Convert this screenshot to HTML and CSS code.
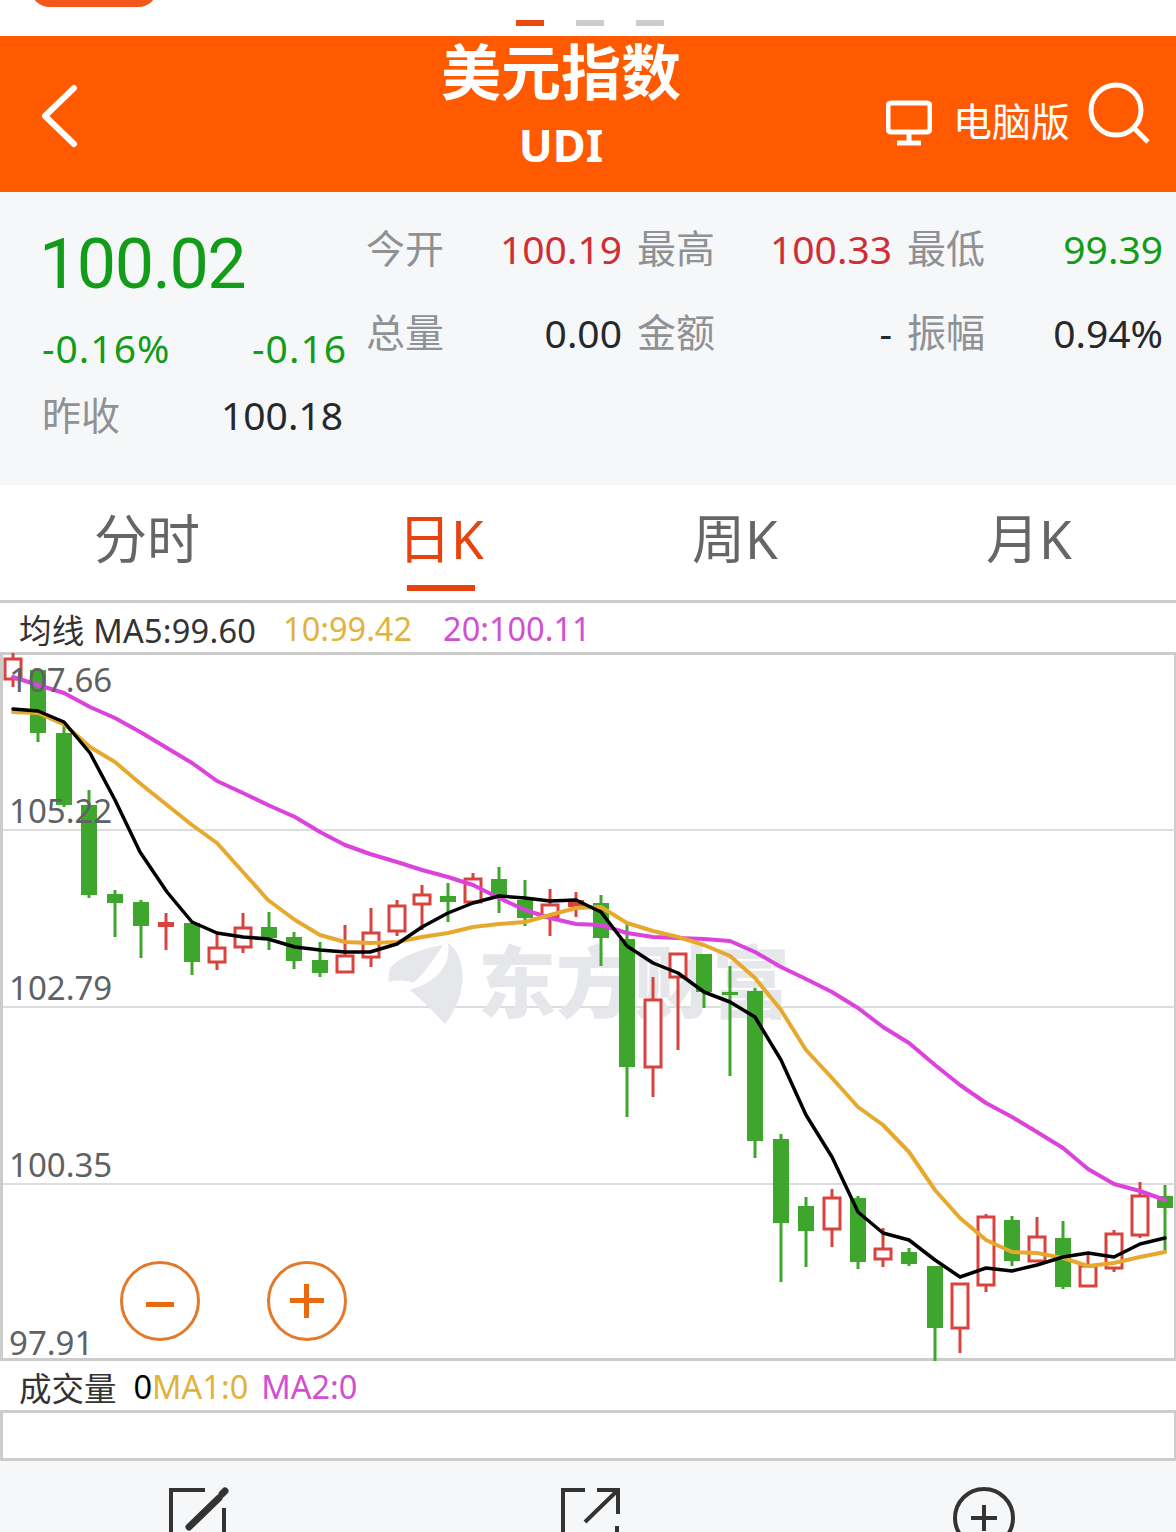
FILE: index.html
```html
<!DOCTYPE html>
<html lang="zh-CN">
<head>
    <meta charset="UTF-8">
    <title>美元指数 UDI</title>
    <link rel="stylesheet" href="styles.css">
</head>
<body>
    <div class="strip">
        <div class="pill"></div>
        <div class="dots"><i class="on"></i><i></i><i></i></div>
    </div>

    <header class="header">
        <svg class="back" width="40" height="64" viewBox="0 0 40 64"><path d="M34 4 5 32l29 28"/></svg>
        <div class="title">
            <h1>美元指数</h1>
            <p>UDI</p>
        </div>
        <div class="header-right">
            <svg class="monitor" width="46" height="46" viewBox="0 0 46 46"><rect x="2" y="3" width="42" height="29" rx="3"/><path d="M23 32v11M11 43h24"/></svg>
            <span class="pc">电脑版</span>
            <svg class="search" width="64" height="62" viewBox="0 0 64 62"><circle cx="29" cy="28" r="25"/><path d="m47 46 14 14"/></svg>
        </div>
    </header>

    <section class="quote">
        <div class="quote-left">
            <div class="price green">100.02</div>
            <div class="change green"><span>-0.16%</span><span>-0.16</span></div>
            <div class="prev"><span class="label">昨收</span><span class="dark">100.18</span></div>
        </div>
        <div class="quote-grid">
            <span class="label">今开</span><span class="val red">100.19</span>
            <span class="label">最高</span><span class="val red">100.33</span>
            <span class="label">最低</span><span class="val green">99.39</span>
            <span class="label">总量</span><span class="val dark">0.00</span>
            <span class="label">金额</span><span class="val dark">-</span>
            <span class="label">振幅</span><span class="val dark">0.94%</span>
        </div>
    </section>

    <nav class="tabs">
        <div class="tab">分时</div>
        <div class="tab active">日K<i></i></div>
        <div class="tab">周K</div>
        <div class="tab">月K</div>
    </nav>

    <div class="legend">
        <span class="ink ma5">均线 MA5:99.60</span>
        <span class="gold ma10">10:99.42</span>
        <span class="pink ma20">20:100.11</span>
    </div>

    <div class="chart">
        <svg id="kline" width="1176" height="703" viewBox="0 655 1176 703"></svg>
        <div class="zoom-btn minus"><i></i></div>
        <div class="zoom-btn plus"><i></i><i></i></div>
    </div>

    <div class="legend vol">
        <span class="ink vol-name">成交量</span>
        <span class="black">0</span><span class="gold">MA1:0</span>
        <span class="pink ma2">MA2:0</span>
    </div>

    <div class="vol-box"></div>

    <div class="toolbar">
        <svg width="64" height="64" viewBox="0 0 64 64"><path d="M40 4H6v60M59 22v42"/><path class="thick" d="m24 41 30-29"/><path class="thick" d="m57 8 3-3"/></svg>
        <svg width="64" height="64" viewBox="0 0 64 64"><path d="M26 4H4v60M58 40v24"/><path d="M26 36 59 4M38 4h21v24"/></svg>
        <svg width="64" height="64" viewBox="0 0 64 64"><circle cx="31" cy="32" r="29"/><path d="M31 19v26M18 32h26"/></svg>
    </div>

    <script src="chart.js"></script>
</body>
</html>
```

FILE: styles.css
```css
* {
    box-sizing: border-box;
}

html, body {
    margin: 0;
    padding: 0;
}

body {
    width: 1176px;
    height: 1532px;
    overflow: hidden;
    background: #fff;
    font-family: "Noto Sans", "Noto Sans CJK SC", sans-serif;
    color: #333;
}

.strip {
    height: 36px;
    position: relative;
    overflow: hidden;
}

.pill {
    width: 128px;
    height: 40px;
    margin: -33px 0 0 30px;
    background: #f5561b;
    border-radius: 24px;
}

.dots {
    position: absolute;
    left: 516px;
    top: 20px;
    display: flex;
    gap: 32px;
}

.dots i {
    width: 28px;
    height: 6px;
    background: #ccc;
}

.dots i.on {
    background: #ec4a12;
}

.header {
    height: 156px;
    background: #ff5a00;
    color: #fff;
    display: grid;
    grid-template-columns: 414px 294px 1fr;
}

.back {
    margin: 48px 0 0 40px;
    fill: none;
    stroke: #fff;
    stroke-width: 6;
    stroke-linecap: round;
    stroke-linejoin: round;
}

.title {
    text-align: center;
}

.title h1 {
    margin: 0;
    font-size: 60px;
    line-height: 72px;
    font-weight: 700;
}

.title p {
    margin: 1px 0 0;
    font-size: 45px;
    line-height: 72px;
    font-weight: 700;
}

.header-right {
    display: flex;
    align-items: flex-start;
    padding-left: 178px;
}

.monitor, .search {
    fill: none;
    stroke: #fff;
    stroke-width: 5;
}

.monitor {
    margin-top: 64px;
}

.pc {
    margin: 60px 17px 0 21px;
    font-size: 39px;
    line-height: 50px;
    white-space: nowrap;
}

.search {
    margin-top: 46px;
    flex: none;
}

.quote {
    height: 293px;
    background: #f6f7f9;
    display: flex;
    font-size: 39px;
}

.quote-left {
    width: 366px;
    padding: 0 19px 0 42px;
    flex: none;
}

.price {
    font-family: Roboto, sans-serif;
    font-size: 70px;
    line-height: 70px;
    margin: 37px 0 0 -3px;
    letter-spacing: -1.5px;
}

.change, .prev {
    display: flex;
    justify-content: space-between;
    line-height: 50px;
}

.change {
    margin-top: 24px;
    letter-spacing: 1px;
}

.prev {
    margin-top: 17px;
    padding-right: 4px;
}

.quote-grid {
    width: 798px;
    height: 184px;
    display: grid;
    grid-template-columns: 78px 178px 93px 177px 93px 178px;
    grid-auto-rows: 84px;
    padding-top: 12px;
    align-items: center;
}

.quote-grid .val {
    text-align: right;
    padding-top: 4px;
}

.quote-grid .label {
    text-align: right;
}

.label {
    color: #8f9194;
    font-size: 39px;
}

.green {
    color: #129c1a;
}

.red {
    color: #cf2e33;
}

.dark {
    color: #26282b;
}

.tabs {
    height: 118px;
    display: flex;
    border-bottom: 3px solid #ccc;
}

.tab {
    flex: 1;
    text-align: center;
    font-size: 53px;
    line-height: 60px;
    padding-top: 24px;
    color: #666;
}

.tab.active {
    color: #e8430f;
}

.tab.active i {
    display: block;
    width: 68px;
    height: 6px;
    margin: 16px auto 0;
    background: #e8430f;
}

.legend {
    height: 52px;
    display: flex;
    align-items: center;
    padding: 2px 0 0 19px;
    font-size: 32.5px;
    border-bottom: 3px solid #ccc;
    white-space: nowrap;
}

.ink {
    color: #333;
}

.black {
    color: #000;
}

.gold {
    color: #e2b33c;
}

.pink {
    color: #d24fd2;
}

.ma5 {
    letter-spacing: 0.25px;
}

.ma10 {
    margin-left: 27px;
}

.ma20 {
    margin-left: 31px;
}

.vol-name {
    margin-right: 17px;
}

.ma2 {
    margin-left: 13px;
}

.chart {
    position: relative;
    height: 706px;
    border-left: 3px solid #ccc;
    border-right: 2px solid #ccc;
    border-bottom: 3px solid #ccc;
}

#kline {
    position: absolute;
    left: -3px;
    top: 0;
    overflow: visible;
}

.zoom-btn {
    position: absolute;
    top: 606px;
    width: 80px;
    height: 80px;
    border: 3px solid #e2792b;
    border-radius: 50%;
}

.zoom-btn i {
    position: absolute;
    background: #ea6a10;
    left: 23px;
    top: 34px;
    width: 28px;
    height: 5px;
}

.minus {
    left: 117px;
}

.minus i {
    top: 38px;
}

.plus {
    left: 264px;
}

.plus i {
    left: 20px;
    width: 34px;
}

.plus i + i {
    left: 34px;
    top: 20px;
    width: 5px;
    height: 34px;
}

.vol-box {
    height: 48px;
    border-left: 3px solid #ccc;
    border-right: 2px solid #ccc;
    border-bottom: 3px solid #ccc;
}

.toolbar {
    height: 71px;
    background: #f6f7f9;
    overflow: hidden;
    display: grid;
    grid-template-columns: repeat(3, 394px);
    padding-top: 25px;
    justify-items: center;
}

.toolbar svg {
    fill: none;
    stroke: #333;
    stroke-width: 4;
}

.toolbar .thick {
    stroke-width: 7;
    stroke-linecap: round;
}

/* chart bits, filled in by chart.js */
.grid-line {
    stroke: #ddd;
    stroke-width: 2;
}

.axis {
    font-size: 33px;
    fill: #5f6163;
}

.mark {
    fill: #e6e7ea;
}

.mark-text {
    font-family: "Noto Sans CJK SC", sans-serif;
    font-size: 78px;
    font-weight: 900;
}

.ma-line {
    fill: none;
    stroke-linejoin: round;
    stroke-linecap: round;
}
```

FILE: chart.js
```js
// type, x, wick top, body top, body bottom, wick bottom
const upColor = "#d8433d";
const downColor = "#3fa62d";

const candles = [
    ["u", 13, 653, 658, 680, 687],
    ["d", 38, 670, 670, 733, 742],
    ["d", 64, 725, 733, 805, 807],
    ["d", 89, 790, 805, 895, 898],
    ["d", 115, 890, 894, 903, 937],
    ["d", 141, 900, 902, 926, 958],
    ["f", 166, 913, 922, 927, 950],
    ["d", 192, 923, 923, 962, 975],
    ["u", 217, 933, 947, 963, 970],
    ["u", 243, 913, 927, 948, 953],
    ["d", 269, 912, 927, 938, 950],
    ["d", 294, 932, 937, 961, 969],
    ["d", 320, 942, 960, 973, 977],
    ["u", 345, 925, 955, 973, 973],
    ["u", 371, 908, 932, 958, 967],
    ["u", 397, 900, 905, 932, 936],
    ["u", 422, 885, 894, 905, 930],
    ["d", 448, 883, 896, 902, 922],
    ["u", 473, 873, 878, 903, 903],
    ["d", 499, 867, 879, 895, 913],
    ["d", 525, 880, 900, 918, 926],
    ["u", 550, 889, 904, 918, 936],
    ["f", 576, 892, 900, 907, 917],
    ["d", 601, 895, 903, 938, 966],
    ["d", 627, 922, 939, 1067, 1117],
    ["u", 653, 977, 999, 1068, 1097],
    ["u", 678, 953, 953, 978, 1050],
    ["d", 704, 954, 954, 992, 1008],
    ["d", 730, 966, 992, 995, 1076],
    ["d", 755, 988, 991, 1141, 1158],
    ["d", 781, 1134, 1139, 1223, 1282],
    ["d", 806, 1197, 1206, 1231, 1267],
    ["u", 832, 1189, 1197, 1230, 1247],
    ["d", 858, 1196, 1198, 1262, 1269],
    ["u", 883, 1228, 1248, 1260, 1267],
    ["d", 909, 1248, 1252, 1264, 1266],
    ["d", 935, 1266, 1266, 1328, 1361],
    ["u", 960, 1283, 1283, 1329, 1353],
    ["u", 986, 1214, 1216, 1286, 1292],
    ["d", 1012, 1216, 1220, 1261, 1266],
    ["u", 1037, 1217, 1236, 1262, 1262],
    ["d", 1063, 1221, 1238, 1287, 1289],
    ["u", 1088, 1255, 1265, 1287, 1287],
    ["u", 1114, 1230, 1233, 1269, 1272],
    ["u", 1140, 1182, 1195, 1236, 1238],
    ["d", 1165, 1185, 1196, 1208, 1252]
];

const ma5 = "13,709 38,711 64,722 90,753 115,800 140,852 167,892 192,922 217,933 243,937 268,939 295,947 320,950 345,952 370,952 397,944 422,927 448,913 473,903 499,896 525,898 550,901 576,900 601,912 627,946 653,963 678,973 704,992 730,1002 755,1017 781,1060 806,1115 832,1157 858,1212 883,1233 909,1240 935,1260 960,1277 986,1268 1012,1271 1037,1265 1063,1257 1088,1253 1114,1257 1140,1244 1165,1238";
const ma10 = "13,712 38,713 65,725 90,747 115,762 142,785 167,805 192,825 217,843 243,872 268,900 295,920 320,935 345,942 370,943 397,942 422,937 448,933 473,927 499,924 525,922 550,915 576,908 601,907 627,923 653,931 678,937 704,945 730,956 755,978 781,1010 806,1050 832,1078 858,1107 883,1125 909,1152 935,1190 960,1218 986,1240 1012,1252 1037,1253 1063,1258 1088,1266 1114,1263 1140,1257 1165,1252";
const ma20 = "13,677 38,685 64,693 90,707 115,718 142,733 167,748 192,763 217,781 243,793 268,805 295,817 320,832 345,845 370,854 397,862 422,870 448,877 473,885 499,898 525,910 550,918 576,924 601,925 627,933 653,937 678,938 704,939 730,941 755,952 781,967 806,979 832,992 858,1008 883,1027 909,1043 935,1065 960,1085 986,1103 1012,1117 1037,1132 1063,1148 1088,1169 1114,1184 1140,1191 1165,1200";

const axisLabels = [[9, 692, "107.66"], [9, 823, "105.22"], [9, 1000, "102.79"], [9, 1177, "100.35"], [9, 1355, "97.91"]];

let html = "";

[830, 1007, 1184].forEach(function(y) {
    html += `<line class="grid-line" x1="3" x2="1175" y1="${y}" y2="${y}"/>`;
});

// watermark
html += `<path class="mark" d="M390 968C402 955 425 948 443 945C432 962 424 974 413 983C404 980 396 980 388 982Z"/>`;
html += `<path class="mark" d="M448 943C468 958 468 995 445 1024C434 1012 422 1000 410 990C430 984 452 970 448 943Z"/>`;
html += `<text class="mark mark-text" x="478" y="1012">东方财富</text>`;

candles.forEach(function(c) {
    const color = c[0] === "d" ? downColor : upColor;
    const x = c[1];
    html += `<line x1="${x}" x2="${x}" y1="${c[2]}" y2="${c[5]}" stroke="${color}" stroke-width="3"/>`;
    if (c[0] === "u") {
        html += `<rect x="${x - 8}" y="${c[3] + 1}" width="16" height="${c[4] - c[3] - 2}" fill="#fff" stroke="${color}" stroke-width="3"/>`;
    } else {
        html += `<rect x="${x - 8}" y="${c[3]}" width="16" height="${c[4] - c[3]}" fill="${color}"/>`;
    }
});

html += `<polyline class="ma-line" points="${ma20}" stroke="#dc42dc" stroke-width="4"/>`;
html += `<polyline class="ma-line" points="${ma10}" stroke="#e6a92e" stroke-width="4"/>`;
html += `<polyline class="ma-line" points="${ma5}" stroke="#000" stroke-width="3.5"/>`;

axisLabels.forEach(function(l) {
    html += `<text class="axis" x="${l[0]}" y="${l[1]}">${l[2]}</text>`;
});

document.getElementById("kline").innerHTML = html;
```
